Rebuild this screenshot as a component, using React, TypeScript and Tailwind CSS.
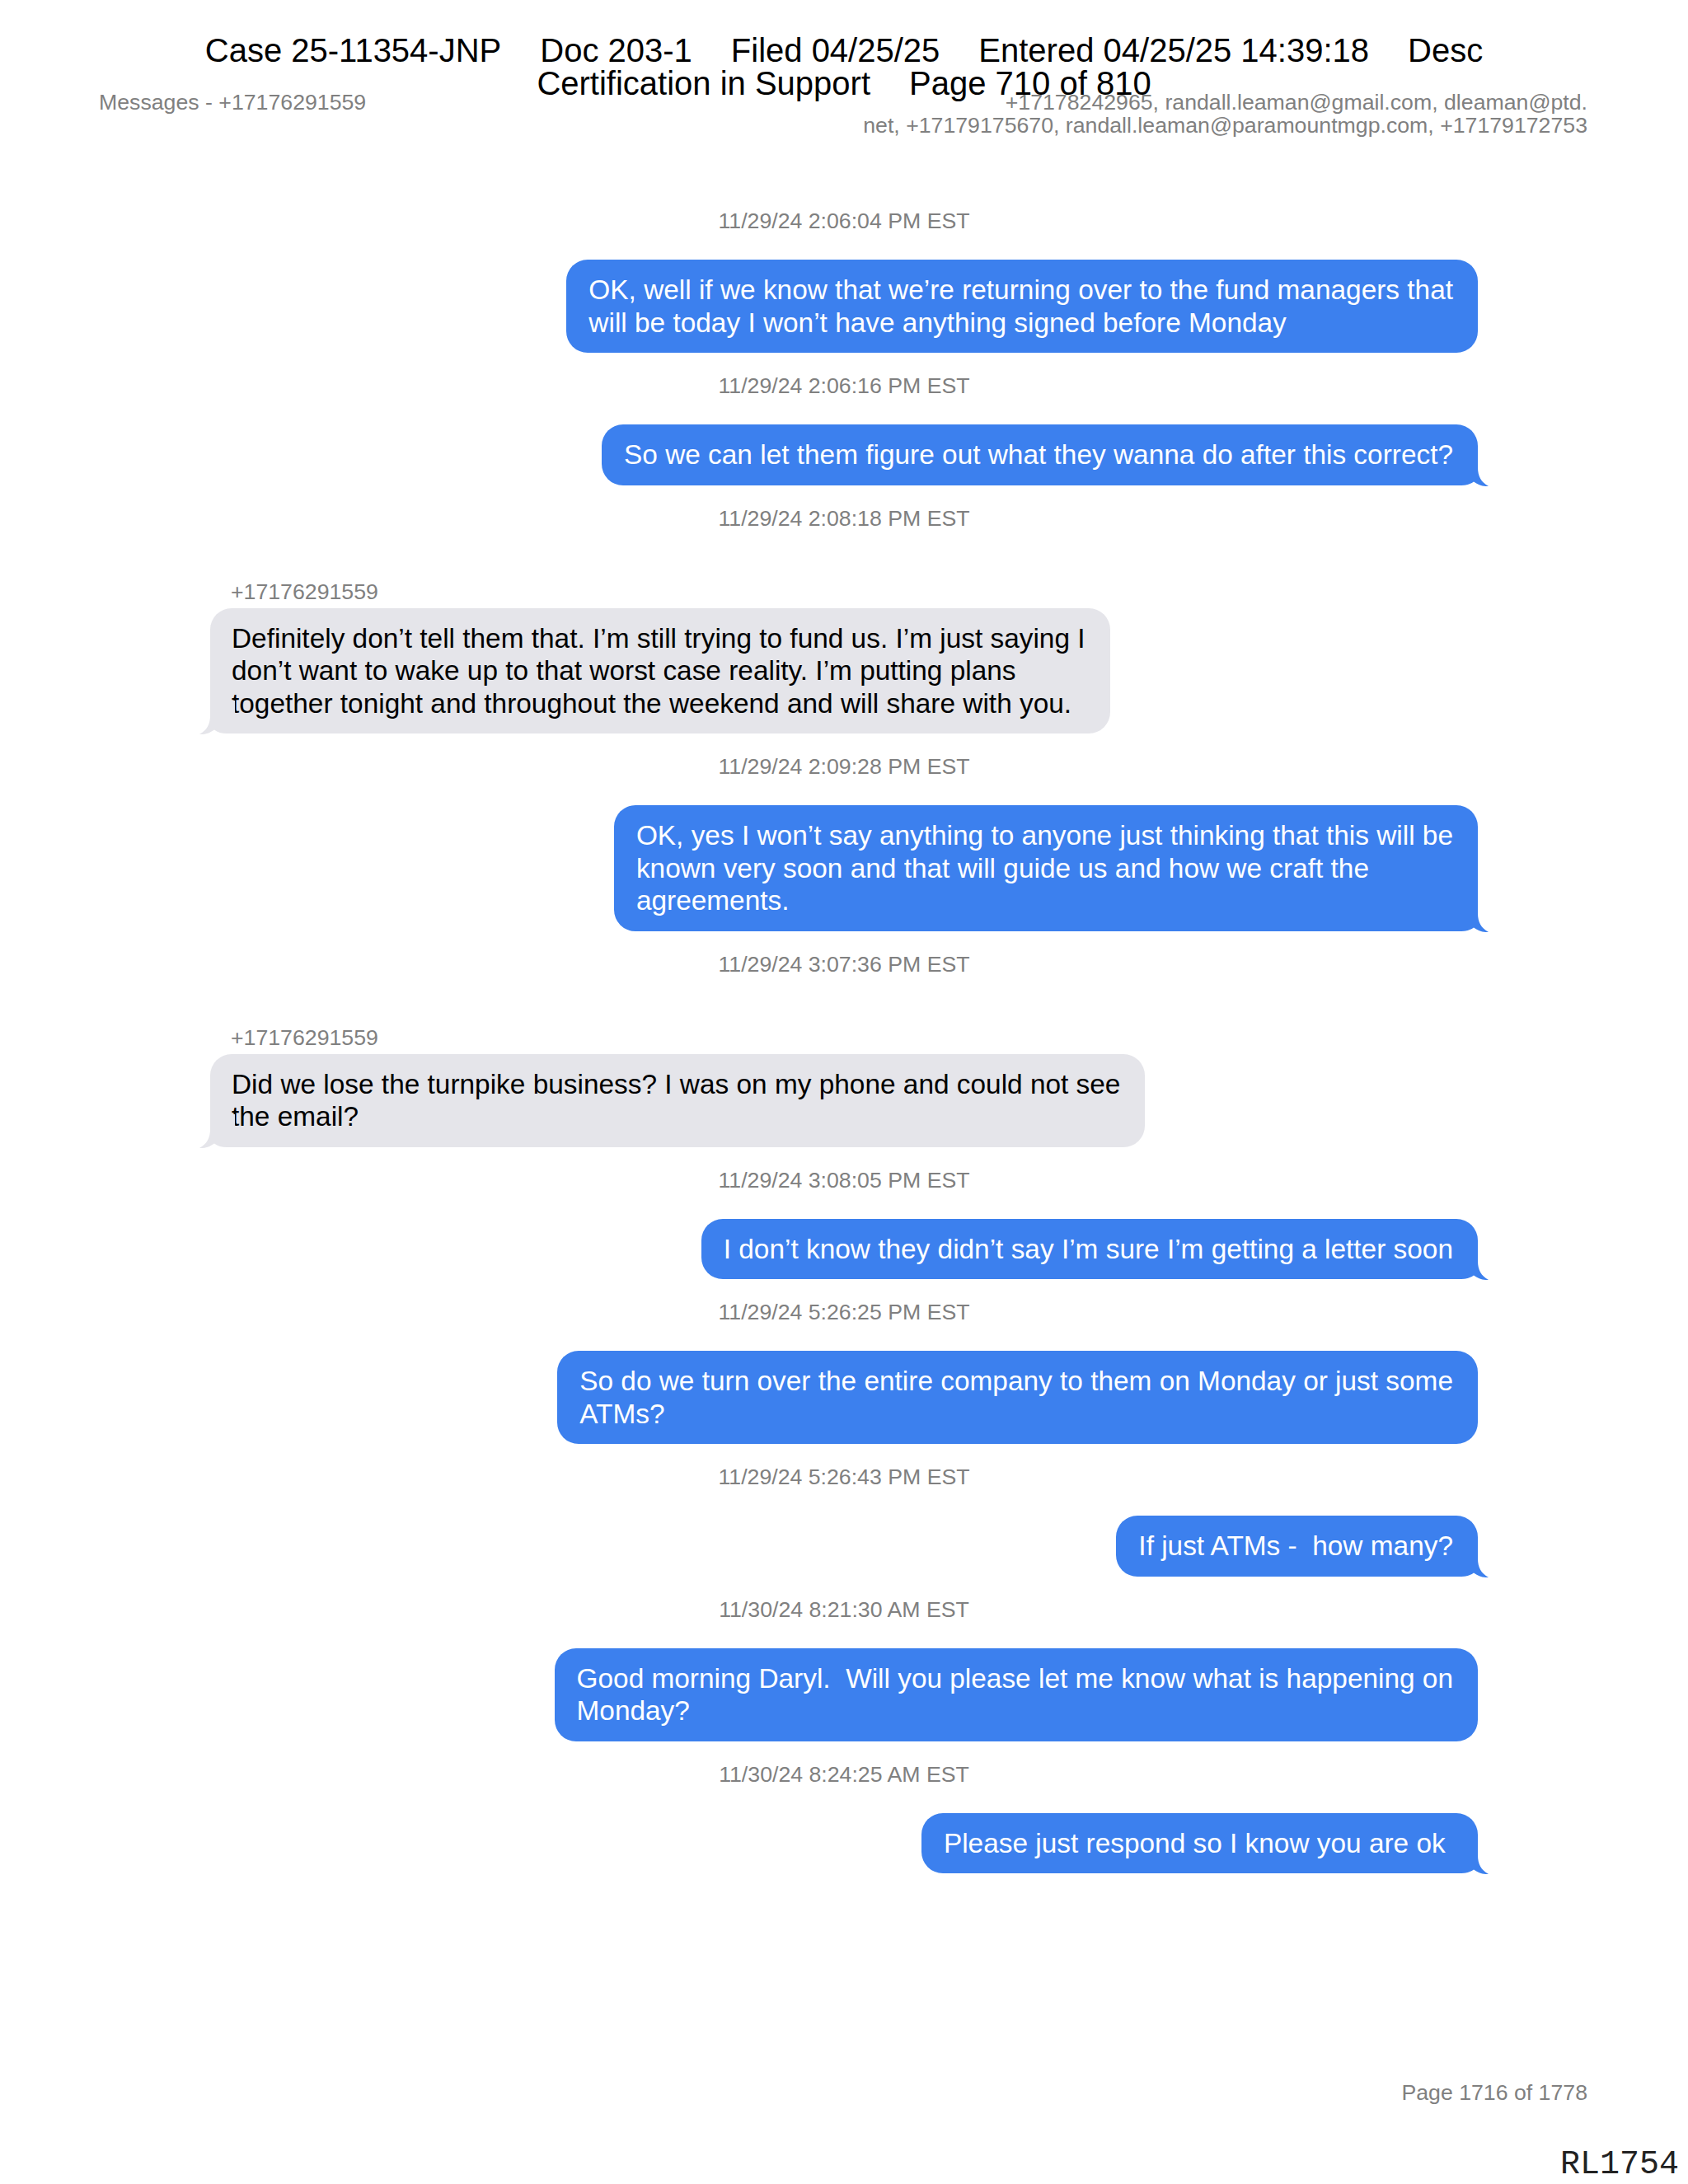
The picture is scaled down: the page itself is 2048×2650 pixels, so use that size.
import React from "react";

type Msg = {
  ts: string;
  dir: "in" | "out";
  lines: string[];
  tail: boolean;
  sender?: string;
};

const msgs: Msg[] = [
  {
    ts: "11/29/24 2:06:04 PM EST",
    dir: "out",
    tail: false,
    lines: [
      "OK, well if we know that we\u2019re returning over to the fund managers that",
      "will be today I won\u2019t have anything signed before Monday",
    ],
  },
  {
    ts: "11/29/24 2:06:16 PM EST",
    dir: "out",
    tail: true,
    lines: ["So we can let them figure out what they wanna do after this correct?"],
  },
  {
    ts: "11/29/24 2:08:18 PM EST",
    dir: "in",
    tail: true,
    sender: "+17176291559",
    lines: [
      "Definitely don\u2019t tell them that. I\u2019m still trying to fund us. I\u2019m just saying I",
      "don\u2019t want to wake up to that worst case reality. I\u2019m putting plans",
      "together tonight and throughout the weekend and will share with you.",
    ],
  },
  {
    ts: "11/29/24 2:09:28 PM EST",
    dir: "out",
    tail: true,
    lines: [
      "OK, yes I won\u2019t say anything to anyone just thinking that this will be",
      "known very soon and that will guide us and how we craft the",
      "agreements.",
    ],
  },
  {
    ts: "11/29/24 3:07:36 PM EST",
    dir: "in",
    tail: true,
    sender: "+17176291559",
    lines: [
      "Did we lose the turnpike business? I was on my phone and could not see",
      "the email?",
    ],
  },
  {
    ts: "11/29/24 3:08:05 PM EST",
    dir: "out",
    tail: true,
    lines: ["I don\u2019t know they didn\u2019t say I\u2019m sure I\u2019m getting a letter soon"],
  },
  {
    ts: "11/29/24 5:26:25 PM EST",
    dir: "out",
    tail: false,
    lines: [
      "So do we turn over the entire company to them on Monday or just some",
      "ATMs?",
    ],
  },
  {
    ts: "11/29/24 5:26:43 PM EST",
    dir: "out",
    tail: true,
    lines: ["If just ATMs -  how many?"],
  },
  {
    ts: "11/30/24 8:21:30 AM EST",
    dir: "out",
    tail: false,
    lines: [
      "Good morning Daryl.  Will you please let me know what is happening on",
      "Monday?",
    ],
  },
  {
    ts: "11/30/24 8:24:25 AM EST",
    dir: "out",
    tail: true,
    lines: ["Please just respond so I know you are ok "],
  },
];

function Tail({ dir }: { dir: "in" | "out" }) {
  const fill = dir === "out" ? "#3c80ee" : "#e5e5ea";
  return (
    <svg
      viewBox="0 0 43 41"
      className={
        dir === "out"
          ? "absolute right-[-13px] bottom-[-1px] w-[43px] h-[41px]"
          : "absolute left-[-13px] bottom-[-1px] w-[43px] h-[41px] -scale-x-100"
      }
    >
      <path
        d="M0 0 H30 V18 C30 29 34 36 43 41 C36 41.5 30 39 25 35.5 C21 38.5 16 40 10 40 H0 Z"
        fill={fill}
      />
    </svg>
  );
}

function Bubble({ m }: { m: Msg }) {
  const out = m.dir === "out";
  return (
    <div
      className={
        out
          ? "relative w-fit self-end rounded-[26px] bg-[#3c80ee] text-white pl-[27px] pr-[30px] py-[17px] text-[33.4px] leading-[39.5px] whitespace-pre"
          : "relative w-fit self-start rounded-[26px] bg-[#e5e5ea] text-black pl-[26px] pr-[30px] py-[17px] text-[33.4px] leading-[39.5px] whitespace-pre"
      }
    >
      {m.lines.map((l, i) => (
        <div key={i}>{l}</div>
      ))}
      {m.tail && <Tail dir={m.dir} />}
    </div>
  );
}

export default function App() {
  return (
    <div className="relative w-[2048px] h-[2650px] bg-white flex flex-col font-['Liberation_Sans',Arial,sans-serif]">
      {/* Court filing stamp overlay */}
      <div className="absolute top-[41px] left-0 right-0 text-center text-black text-[40px] leading-[40px]">
        <div className="flex justify-center gap-[47px] whitespace-pre">
          <span>Case 25-11354-JNP</span>
          <span>Doc 203-1</span>
          <span>Filed 04/25/25</span>
          <span>Entered 04/25/25 14:39:18</span>
          <span>Desc</span>
        </div>
        <div className="flex justify-center gap-[47px] whitespace-pre">
          <span>Certification in Support</span>
          <span>Page 710 of 810</span>
        </div>
      </div>

      {/* Messages header */}
      <div className="mt-[110px] pl-[120px] pr-[122px] flex justify-between items-start text-[26.7px] leading-[28px] text-[#808080]">
        <div>Messages - +17176291559</div>
        <div className="text-right">
          <div>+17178242965, randall.leaman@gmail.com, dleaman@ptd.</div>
          <div>net, +17179175670, randall.leaman@paramountmgp.com, +17179172753</div>
        </div>
      </div>

      {/* Conversation */}
      <div className="mt-[87px] px-[255px] flex flex-col gap-[25px]">
        {msgs.map((m, i) => (
          <div key={i} className="flex flex-col">
            <div
              className={
                m.dir === "in"
                  ? "text-center text-[26.7px] leading-[30px] text-[#808080] mb-[59px]"
                  : "text-center text-[26.7px] leading-[30px] text-[#808080] mb-[32px]"
              }
            >
              {m.ts}
            </div>
            {m.sender && (
              <div className="pl-[25px] text-[26.7px] leading-[30px] text-[#808080] mb-[5px]">
                {m.sender}
              </div>
            )}
            <Bubble m={m} />
          </div>
        ))}
      </div>

      <div className="flex-1" />

      {/* Footer */}
      <div className="pr-[122px] text-right text-[26.7px] leading-[30px] text-[#808080]">
        Page 1716 of 1778
      </div>
      <div className="mt-[53px] mb-[3px] pr-[11px] text-right text-[40px] leading-[40px] text-[#222] font-['Liberation_Mono','Courier_New',monospace]">
        RL1754
      </div>
    </div>
  );
}
